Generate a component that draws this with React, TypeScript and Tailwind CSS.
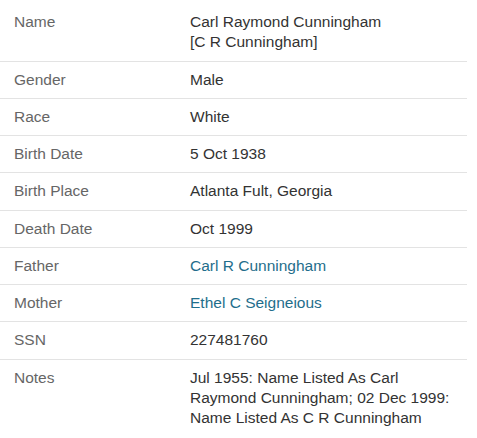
const ROWS: { label: string; value: string[]; link?: boolean }[] = [
  { label: 'Name', value: ['Carl Raymond Cunningham', '[C R Cunningham]'] },
  { label: 'Gender', value: ['Male'] },
  { label: 'Race', value: ['White'] },
  { label: 'Birth Date', value: ['5 Oct 1938'] },
  { label: 'Birth Place', value: ['Atlanta Fult, Georgia'] },
  { label: 'Death Date', value: ['Oct 1999'] },
  { label: 'Father', value: ['Carl R Cunningham'], link: true },
  { label: 'Mother', value: ['Ethel C Seigneious'], link: true },
  { label: 'SSN', value: ['227481760'] },
  {
    label: 'Notes',
    value: ['Jul 1955: Name Listed As Carl Raymond Cunningham; 02 Dec 1999: Name Listed As C R Cunningham'],
  },
];

export default function App() {
  return (
    <div className="w-[477px] h-[438px] bg-white pt-[4px] font-['Liberation_Sans',Arial,sans-serif] text-[15.5px] leading-[20.25px]">
      <div className="w-[467px]">
        {ROWS.map((row, i) => (
          <div
            key={row.label}
            className={`grid grid-cols-[176px_1fr] py-2 ${i < ROWS.length - 1 ? 'border-b border-[#e3e3e3]' : ''}`}
          >
            <div className="pl-[14px] text-[#666666]">{row.label}</div>
            <div className={`pl-[14px] pr-[10px] ${row.link ? 'text-[#1f6e8c]' : 'text-[#333333]'}`}>
              {row.value.map((v) => (
                <div key={v}>{v}</div>
              ))}
            </div>
          </div>
        ))}
      </div>
    </div>
  );
}
